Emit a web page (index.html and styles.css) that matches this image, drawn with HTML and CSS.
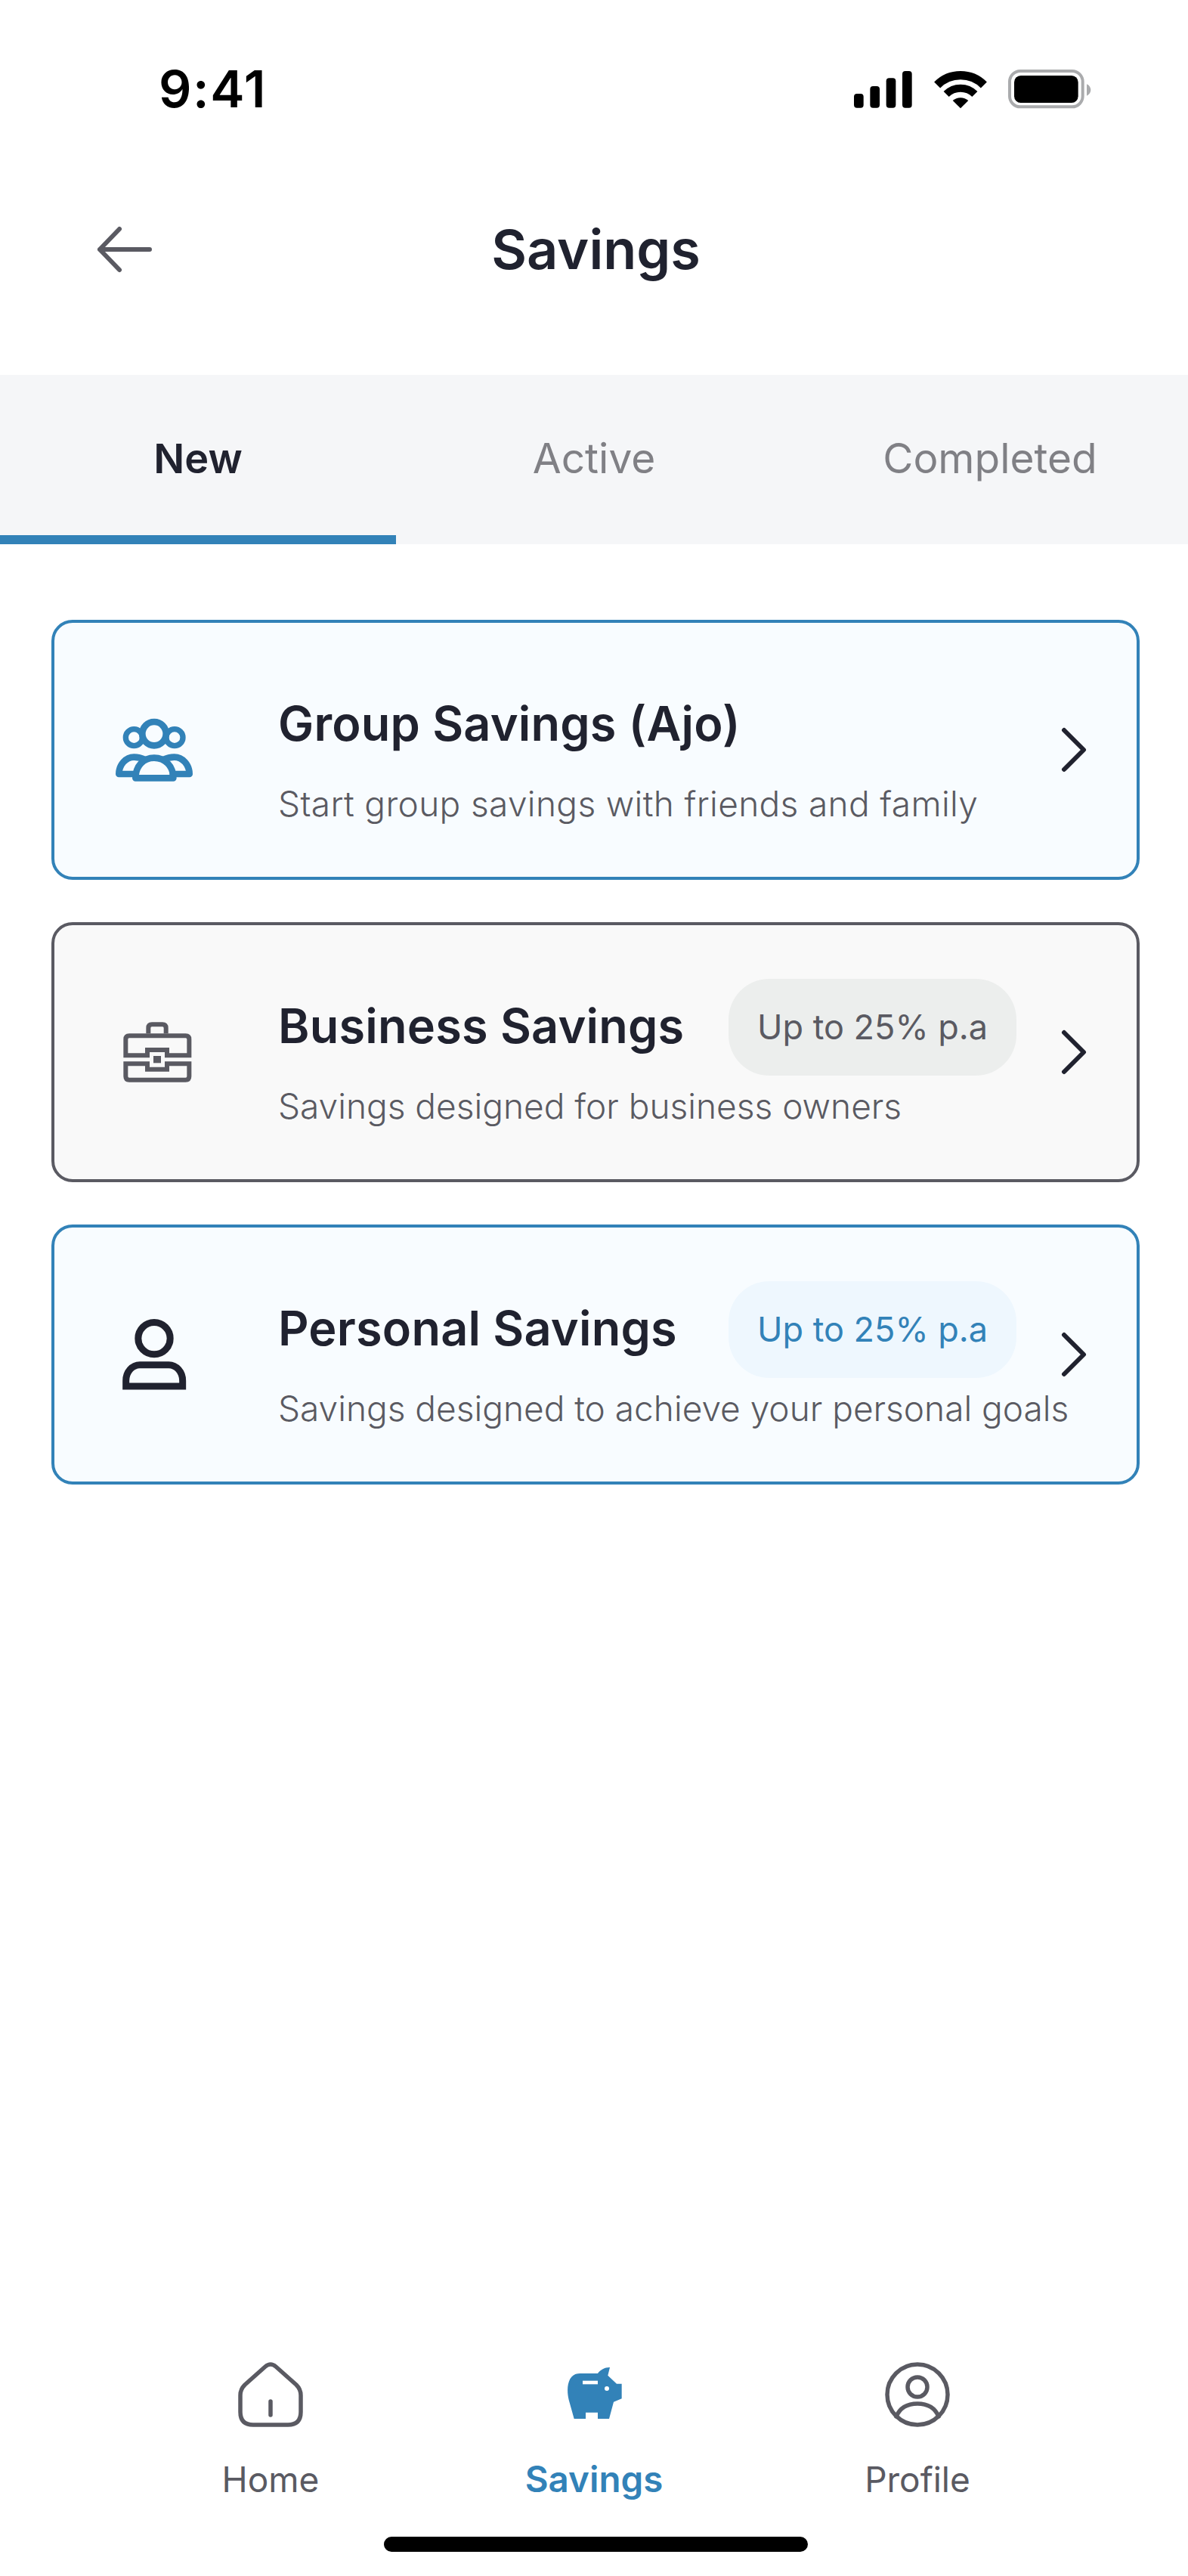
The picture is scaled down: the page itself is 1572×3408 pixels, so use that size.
FILE: index.html
```html
<!DOCTYPE html>
<html lang="en">
<head>
<meta charset="utf-8">
<title>Savings</title>
<link rel="stylesheet" href="styles.css">
</head>
<body>
<div class="screen">
  <div class="status">
    <span class="time">9:41</span>
    <svg class="status-icons" viewBox="0 0 1200 300" width="400" height="100">
      <rect x="150" y="192" width="38" height="56" rx="12"/>
      <rect x="214" y="162" width="38" height="86" rx="12"/>
      <rect x="278" y="130" width="38" height="118" rx="12"/>
      <rect x="342" y="102" width="38" height="146" rx="12"/>
      <path class="wifi" stroke-width="34" d="M480.4 157.4A131 131 0 0 1 665.6 157.4"/>
      <path class="wifi" stroke-width="30" d="M516.4 193.4A80 80 0 0 1 629.6 193.4"/>
      <path d="M573 250L542 219A48 48 0 0 1 604 219Z"/>
      <rect class="batt" x="768" y="102" width="290" height="142" rx="42"/>
      <rect x="786" y="120" width="254" height="108" rx="26"/>
      <path class="cap" d="M1074 154C1084 158 1090 168 1090 177C1090 186 1084 196 1074 200Z"/>
    </svg>
  </div>
  <header class="header">
    <svg class="back" viewBox="0 0 80 64" width="80" height="64"><path d="M72 32H6M32 5L6 32L32 59"/></svg>
    <h1 class="title">Savings</h1>
  </header>
  <nav class="tabs">
    <div class="tab tab-on">New</div>
    <div class="tab">Active</div>
    <div class="tab">Completed</div>
  </nav>
  <main class="cards">
    <section class="card card-blue">
      <svg class="card-icon" viewBox="0 0 540 432" width="180" height="144">
        <g class="i-blue">
          <circle cx="252" cy="152" r="47"/>
          <circle cx="172" cy="167" r="33" stroke-width="22"/>
          <circle cx="333" cy="167" r="33" stroke-width="22"/>
          <path d="M178 328C178 280 210 248 252 248C295 248 328 280 328 328Z"/>
          <path d="M178 312H112C112 275 140 245 172 245C190 245 205 250 215 255"/>
          <path d="M326 312H392C392 275 364 245 332 245C314 245 299 250 289 255"/>
        </g>
      </svg>
      <div class="card-body">
        <div class="card-top"><h2 class="card-title">Group Savings (Ajo)</h2></div>
        <p class="card-sub card-sub-wide">Start group savings with friends and family</p>
      </div>
      <svg class="chev" viewBox="0 0 36 60" width="36" height="60"><path d="M5 4L31 30L5 56"/></svg>
    </section>
    <section class="card card-grey">
      <svg class="card-icon" viewBox="0 0 540 432" width="180" height="144">
        <g class="i-grey">
          <path d="M229 142V120Q229 106 243 106H285Q299 106 299 120V142"/>
          <path d="M139 229V165Q139 151 153 151H377Q391 151 391 165V229H303V207H225V229Z"/>
          <path d="M139 262H225V284H303V262H391V312Q391 326 377 326H153Q139 326 139 312Z"/>
        </g>
        <rect class="i-dot" x="249" y="231" width="30" height="28"/>
      </svg>
      <div class="card-body">
        <div class="card-top"><h2 class="card-title">Business Savings</h2><span class="pill pill-grey">Up to 25% p.a</span></div>
        <p class="card-sub">Savings designed for business owners</p>
      </div>
      <svg class="chev" viewBox="0 0 36 60" width="36" height="60"><path d="M5 4L31 30L5 56"/></svg>
    </section>
    <section class="card card-blue">
      <svg class="card-icon" viewBox="0 0 540 432" width="180" height="144">
        <g class="i-dark">
          <circle cx="252" cy="152" r="63.5"/>
          <path d="M140 342V320C140 285 165 257 195 257H310C340 257 365 285 365 320V342Z"/>
        </g>
      </svg>
      <div class="card-body">
        <div class="card-top"><h2 class="card-title">Personal Savings</h2><span class="pill pill-blue">Up to 25% p.a</span></div>
        <p class="card-sub">Savings designed to achieve your personal goals</p>
      </div>
      <svg class="chev" viewBox="0 0 36 60" width="36" height="60"><path d="M5 4L31 30L5 56"/></svg>
    </section>
  </main>
  <footer class="bottom">
    <div class="nav">
      <div class="nav-item">
        <svg class="nav-icon" viewBox="0 0 86 86" width="86" height="86"><path d="M36 6Q43 0 50 6L77 30Q83 36 83 44V66Q83 83 66 83H20Q3 83 3 66V44Q3 36 9 30Z"/><path d="M43 52V70"/></svg>
        <span class="nav-label">Home</span>
      </div>
      <div class="nav-item nav-on">
        <svg class="nav-pig" viewBox="0 45 390 258" width="130" height="86">
          <path d="M116 270L95 195C88 165 88 135 100 112C110 95 125 90 140 90H210C220 75 240 65 258 66L250 98L285 131H305V190L273 203L255 270H210V245H162V270Z"/>
          <rect x="150" y="119" width="60" height="14"/>
          <circle cx="246" cy="150" r="9"/>
        </svg>
        <span class="nav-label">Savings</span>
      </div>
      <div class="nav-item">
        <svg class="nav-icon" viewBox="0 0 86 86" width="86" height="86"><circle cx="43" cy="43" r="40"/><circle cx="43" cy="33" r="13"/><path d="M15 72C20 60 30 55 43 55C56 55 66 60 71 72"/></svg>
        <span class="nav-label">Profile</span>
      </div>
    </div>
    <div class="home-bar"></div>
  </footer>
</div>
</body>
</html>
```
FILE: styles.css
```css
* { box-sizing: border-box; margin: 0; padding: 0; }
html, body { background: #fff; }
body { font-family: Inter, "Noto Sans", sans-serif; color: #20222f; }
.screen { width: 1572px; height: 3408px; display: flex; flex-direction: column; overflow: hidden; }

.status { height: 234px; display: flex; align-items: center; justify-content: space-between; padding: 0 92px 0 210px; }
.time { font-size: 68px; font-weight: 600; color: #000; letter-spacing: 1.5px; line-height: 1; }
.status-icons { display: block; align-self: flex-start; margin-top: 60px; }
.wifi { fill: none; stroke: #000; }
.batt { fill: none; stroke: #aaabad; stroke-width: 12; }
.cap { fill: #aaabad; }

.header { height: 192px; margin-bottom: 70px; display: flex; align-items: center; justify-content: center; position: relative; }
.back { position: absolute; left: 126px; top: 64px; fill: none; stroke: #5a5a62; stroke-width: 6; stroke-linecap: round; stroke-linejoin: round; }
.title { font-size: 72px; font-weight: 600; line-height: 80px; padding-left: 5px; }

.tabs { height: 224px; background: #f5f6f8; display: grid; grid-template-columns: repeat(3, 524px); }
.tab { display: flex; align-items: center; justify-content: center; font-size: 55px; color: #808085; border-bottom: 12px solid transparent; padding-top: 8px; }
.tab-on { color: #20222f; font-weight: 600; font-size: 54px; border-bottom-color: #3282b8; }

.cards { display: flex; flex-direction: column; gap: 56px; padding: 100px 64px 0 68px; }
.card { height: 344px; border: 4px solid; border-radius: 28px; display: flex; align-items: center; padding: 0 65px 0 48px; }
.card-blue { background: #f8fcff; border-color: #3282b8; }
.card-grey { background: #f9f9f9; border-color: #5a5a62; }
.card-icon { flex: none; display: block; fill: none; }
.i-blue circle, .i-blue path { stroke: #3282b8; }
.i-blue { stroke-width: 26; stroke-linejoin: round; stroke-linecap: round; }
.i-grey { stroke: #5a5a62; stroke-width: 18; }
.i-dot { fill: #5a5a62; }
.i-dark { stroke: #20222f; stroke-width: 27; }
.card-body { flex: 1; min-width: 0; margin-left: 68px; }
.card-top { height: 128px; display: grid; grid-template-columns: 596px auto; justify-content: start; align-items: center; }
.card-title { font-size: 63px; font-weight: 600; letter-spacing: 0.2px; line-height: 76px; white-space: nowrap; padding-bottom: 4px; }
.pill { height: 128px; width: 381px; border-radius: 54px; display: flex; align-items: center; justify-content: center; font-size: 45px; white-space: nowrap; }
.pill-grey { background: #eceeed; color: #5a5a62; }
.pill-blue { background: #eef7fe; color: #3282b8; }
.card-sub { margin-top: 13px; font-size: 46px; font-weight: 300; line-height: 54px; color: #5a5a62; white-space: nowrap; }
.card-sub-wide { letter-spacing: 0.35px; }
.chev { flex: none; display: block; fill: none; stroke: #20222f; stroke-width: 6; stroke-linecap: round; stroke-linejoin: round; }

.bottom { margin-top: auto; height: 308px; display: flex; flex-direction: column; align-items: center; padding-top: 25px; }
.nav { display: grid; grid-template-columns: repeat(3, 428px); }
.nav-item { display: flex; flex-direction: column; align-items: center; }
.nav-icon { display: block; fill: none; stroke: #5a5a62; stroke-width: 5.5; stroke-linecap: round; stroke-linejoin: round; }
.nav-pig { display: block; fill: #3282b8; }
.nav-pig rect, .nav-pig circle { fill: #fff; }
.nav-label { margin-top: 41px; font-size: 46px; line-height: 56px; color: #5a5a62; }
.nav-on .nav-label { color: #3282b8; font-weight: 600; font-size: 47.5px; }
.home-bar { margin-top: 48px; margin-left: 4px; width: 561px; height: 20px; border-radius: 10px; background: #000; }
```
